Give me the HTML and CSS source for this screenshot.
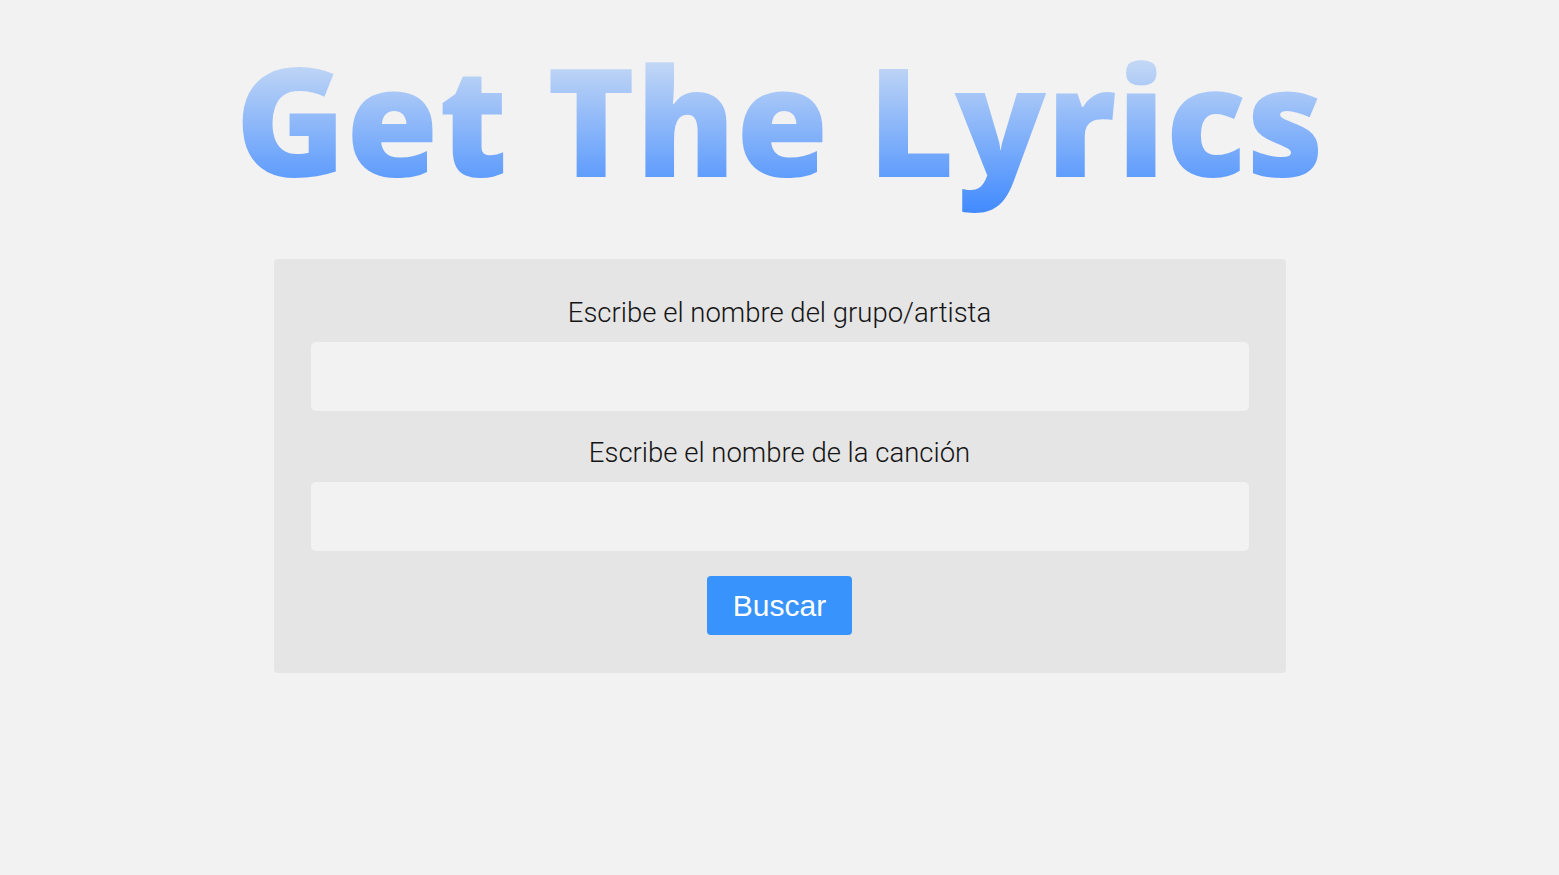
FILE: index.html
```html
<!DOCTYPE html>
<html lang="es">
<head>
<meta charset="utf-8">
<title>Get The Lyrics</title>
<link rel="stylesheet" href="styles.css">
</head>
<body>
<main class="page">
  <h1 class="title">Get The Lyrics</h1>
  <form class="card">
    <label class="label" for="artist">Escribe el nombre del grupo/artista</label>
    <input class="field" id="artist" type="text">
    <label class="label" for="song">Escribe el nombre de la canción</label>
    <input class="field" id="song" type="text">
    <button class="btn" type="button">Buscar</button>
  </form>
</main>
</body>
</html>
```
FILE: styles.css
```css
html, body {
  margin: 0;
  padding: 0;
  background: #f2f2f2;
}
.page {
  display: flex;
  flex-direction: column;
  align-items: center;
  padding-top: 17px;
}
.title {
  margin: 0;
  font-family: "Open Sans", sans-serif;
  font-weight: 800;
  font-size: 150px;
  line-height: 1.362;
  text-align: center;
  background: linear-gradient(to bottom, #e6eef7 0%, #c2d7f5 22%, #3a86ff 100%);
  -webkit-background-clip: text;
  background-clip: text;
  color: transparent;
}
.card {
  margin-top: 38px;
  width: 1012px;
  box-sizing: border-box;
  padding: 37px 37px 38px;
  background: #e5e5e5;
  border-radius: 4px;
  display: flex;
  flex-direction: column;
  align-items: center;
}
.label {
  font-family: Roboto, sans-serif;
  font-weight: 300;
  font-size: 27.5px;
  line-height: 33px;
  color: #141414;
  margin-bottom: 13px;
}
.field {
  width: 100%;
  height: 69px;
  box-sizing: border-box;
  border: none;
  border-radius: 5px;
  background: #f2f2f2;
  margin: 0 0 25px;
  outline: none;
}
.btn {
  font-family: "Liberation Sans", Arial, sans-serif;
  font-size: 30px;
  line-height: 35px;
  color: #fff;
  background: #3893fd;
  border: none;
  border-radius: 4px;
  padding: 12px 25.5px;
}
```
